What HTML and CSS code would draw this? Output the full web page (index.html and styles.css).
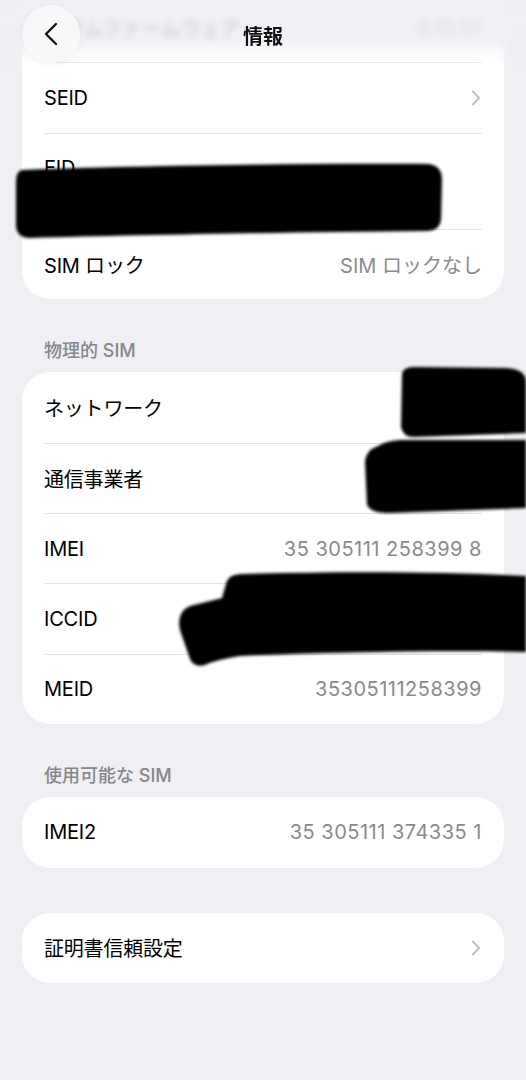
FILE: index.html
```html
<!DOCTYPE html>
<html lang="ja">

<head>
    <meta charset="UTF-8">
    <meta name="viewport" content="width=device-width, initial-scale=1.0">
    <title>情報</title>
    <link rel="stylesheet" href="styles.css">
</head>

<body>
    <div class="screen">
        <main class="content">
            <div class="card">
                <div class="row">
                    <span class="label">モデムファームウェア</span>
                    <span class="value num">6.10.01</span>
                </div>
                <div class="row">
                    <span class="label">SEID</span>
                    <svg class="chevron" viewBox="0 0 10 16"><path d="M2 1.5 L8 8 L2 14.5" /></svg>
                </div>
                <div class="row row-tall">
                    <span class="label">EID</span>
                    <span class="value"></span>
                </div>
                <div class="row">
                    <span class="label">SIM ロック</span>
                    <span class="value">SIM ロックなし</span>
                </div>
            </div>

            <h2 class="group-title">物理的 SIM</h2>
            <div class="card">
                <div class="row">
                    <span class="label">ネットワーク</span>
                    <span class="value"></span>
                </div>
                <div class="row">
                    <span class="label">通信事業者</span>
                    <span class="value"></span>
                </div>
                <div class="row">
                    <span class="label">IMEI</span>
                    <span class="value num">35 305111 258399 8</span>
                </div>
                <div class="row">
                    <span class="label">ICCID</span>
                    <span class="value"></span>
                </div>
                <div class="row">
                    <span class="label">MEID</span>
                    <span class="value num">35305111258399</span>
                </div>
            </div>

            <h2 class="group-title">使用可能な SIM</h2>
            <div class="card">
                <div class="row">
                    <span class="label">IMEI2</span>
                    <span class="value num">35 305111 374335 1</span>
                </div>
            </div>

            <div class="card card-spaced">
                <div class="row">
                    <span class="label">証明書信頼設定</span>
                    <svg class="chevron" viewBox="0 0 10 16"><path d="M2 1.5 L8 8 L2 14.5" /></svg>
                </div>
            </div>
        </main>

        <!-- Frosted nav bar over the scrolled list -->
        <header class="nav">
            <button class="back" aria-label="戻る">
                <svg viewBox="0 0 16 24"><path d="M13 2 L3 12 L13 22" /></svg>
            </button>
            <h1 class="nav-title">情報</h1>
        </header>

        <!-- Marker scribbles hiding private values -->
        <svg class="redact" viewBox="0 0 526 1080">
            <defs>
                <filter id="soft" x="-5%" y="-20%" width="110%" height="140%">
                    <feGaussianBlur stdDeviation="1.6" />
                </filter>
            </defs>
            <g filter="url(#soft)">
                <path d="M22 170 C120 166 300 163 428 164 Q442 165 442 180 L441 220 Q440 230 428 231 C300 232 140 235 30 238 Q17 238 16 226 L16 183 Q16 171 22 170 Z" />
                <path d="M402 374 Q403 367 414 367 L506 368 Q526 369 526 382 L526 433 L414 437 Q403 437 401 427 Z" />
                <path d="M378 446 Q386 441 400 440 L526 440 L526 508 L390 513 Q372 514 367 505 L365 462 Q366 450 378 446 Z" />
                <path d="M226 584 Q228 574 242 574 C350 571 450 572 526 576 L526 652 C450 650 330 652 240 656 Q215 660 205 665 Q194 668 190 659 L180 630 Q176 612 190 606 L222 598 Z" />
            </g>
        </svg>
    </div>
</body>

</html>
```

FILE: styles.css
```css
body {
    margin: 0;
    background: #efeff4;
    font-family: Inter, "Noto Sans CJK JP", sans-serif;
}

.screen {
    position: relative;
    width: 526px;
    height: 1080px;
    overflow: hidden;
    background: #efeff4;
}

.content {
    display: flex;
    flex-direction: column;
    padding: 0 22px;
    margin-top: -8px;
}

.card {
    background: #ffffff;
    border-radius: 28px;
}

.card-spaced {
    margin-top: 45px;
}

.row {
    display: flex;
    align-items: center;
    justify-content: space-between;
    height: 70.4px;
    margin: 0 22px;
    box-sizing: border-box;
    font-size: 20px;
}

.row + .row {
    border-top: 1px solid #e3e3e6;
}

.row-tall {
    flex-direction: column;
    align-items: flex-start;
    justify-content: flex-start;
    height: 96px;
    padding-top: 22px;
    gap: 10px;
}

.label {
    color: #000000;
    letter-spacing: -0.2px;
}

.value {
    color: #8a8a8e;
}

.value.num {
    letter-spacing: 0.5px;
}

.chevron {
    width: 10px;
    height: 16px;
    margin-right: 1px;
    fill: none;
    stroke: #c4c4c7;
    stroke-width: 2.2;
    stroke-linecap: round;
    stroke-linejoin: round;
}

.group-title {
    margin: 0;
    padding: 40px 22px 9px;
    font-size: 18px;
    line-height: 24px;
    font-weight: 500;
    color: #86868b;
}

/* Nav bar */
.nav {
    position: absolute;
    top: 0;
    left: 0;
    right: 0;
    height: 70px;
    display: flex;
    align-items: center;
    justify-content: center;
}

.nav::before {
    content: "";
    position: absolute;
    inset: 0;
    background: linear-gradient(to bottom, rgba(238, 238, 243, 0.88) 0%, rgba(238, 238, 243, 0.8) 55%, rgba(238, 238, 243, 0) 100%);
    backdrop-filter: blur(3px);
    -webkit-mask-image: linear-gradient(to bottom, #000 60%, transparent 100%);
    mask-image: linear-gradient(to bottom, #000 60%, transparent 100%);
}

.back {
    position: absolute;
    left: 22px;
    top: 5px;
    width: 58px;
    height: 58px;
    border: none;
    border-radius: 50%;
    background: #f8f8fa;
    box-shadow: 0 1px 6px rgba(0, 0, 0, 0.06);
    display: flex;
    align-items: center;
    justify-content: center;
    padding: 0;
}

.back svg {
    width: 16px;
    height: 24px;
    fill: none;
    stroke: #111111;
    stroke-width: 2.4;
    stroke-linecap: round;
    stroke-linejoin: round;
}

.nav-title {
    position: relative;
    margin: 0;
    font-size: 20px;
    font-weight: 700;
    color: #111111;
    margin-top: 1px;
}

.redact {
    position: absolute;
    top: 0;
    left: 0;
    width: 526px;
    height: 1080px;
    pointer-events: none;
    fill: #000000;
}
```
